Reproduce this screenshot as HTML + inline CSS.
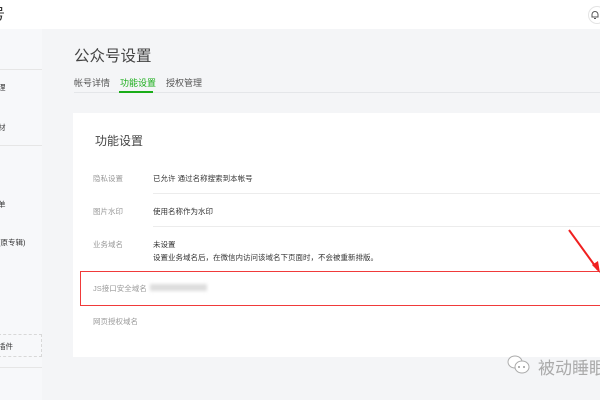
<!DOCTYPE html>
<html><head><meta charset="utf-8"><style>
*{margin:0;padding:0;box-sizing:border-box}
body{width:600px;height:400px;overflow:hidden;background:#f4f5f7;font-family:"Liberation Sans","Noto Sans CJK SC",sans-serif;position:relative;color:#333}
.a{position:absolute;white-space:nowrap}
.lbl{color:#9a9a9a;font-size:7.5px}
.val{color:#353535;font-size:7.5px}
</style></head><body>
<div class="a" style="left:0;top:0;width:600px;height:29px;background:#fff"></div>
<div class="a" style="left:-10px;top:3px;font-size:15px;color:#333">号</div>
<div class="a" style="left:588px;top:6px;width:18px;height:18px;border:1px solid #e4e4e4;border-radius:50%;background:#fff"></div>
<svg class="a" style="left:590px;top:10px" width="10" height="10" viewBox="0 0 10 10"><path d="M2 7 V4.5 a3 3 0 0 1 6 0 V7 H1.5 H8.5 M4 8.5 h2" fill="none" stroke="#555" stroke-width="1"/></svg>
<div class="a" style="left:0;top:29px;width:42px;height:371px;background:#f7f8fa"></div>
<div class="a" style="left:0;top:69px;width:42px;height:1px;background:#e6e6e6"></div>
<div class="a" style="left:0;top:145px;width:42px;height:1px;background:#e6e6e6"></div>
<div class="a val" style="left:-2px;top:82px">理</div>
<div class="a val" style="left:-2px;top:122px">材</div>
<div class="a val" style="left:-2px;top:199px">单</div>
<div class="a val" style="left:-2px;top:237px">(原专辑)</div>
<div class="a" style="left:-2px;top:334px;width:44px;height:23px;border:1px dashed #d8d8d8"></div>
<div class="a val" style="left:-2px;top:341px">插件</div>
<div class="a" style="left:0;top:367px;width:42px;height:1px;background:#e6e6e6"></div>
<div class="a" style="left:74px;top:44px;font-size:15.5px;color:#444">公众号设置</div>
<div class="a" style="left:74px;top:76px;font-size:9px;color:#555">帐号详情</div>
<div class="a" style="left:120px;top:76px;font-size:9px;color:#1aad19">功能设置</div>
<div class="a" style="left:166px;top:76px;font-size:9px;color:#555">授权管理</div>
<div class="a" style="left:74px;top:92px;width:526px;height:1px;background:#e4e6e9"></div>
<div class="a" style="left:119px;top:91px;width:34px;height:2px;background:#1aad19"></div>
<div class="a" style="left:73px;top:113px;width:527px;height:244px;background:#fff"></div>
<div class="a" style="left:95px;top:132px;font-size:12px;color:#444">功能设置</div>
<div class="a lbl" style="left:93px;top:173px">隐私设置</div>
<div class="a val" style="left:153px;top:173px">已允许 通过名称搜索到本帐号</div>
<div class="a" style="left:153px;top:193px;width:447px;height:1px;background:#ececec"></div>
<div class="a lbl" style="left:93px;top:206px">图片水印</div>
<div class="a val" style="left:153px;top:206px">使用名称作为水印</div>
<div class="a" style="left:153px;top:226px;width:447px;height:1px;background:#ececec"></div>
<div class="a lbl" style="left:93px;top:239px">业务域名</div>
<div class="a val" style="left:153px;top:239px">未设置</div>
<div class="a val" style="left:153px;top:252px">设置业务域名后，在微信内访问该域名下页面时，不会被重新排版。</div>
<div class="a" style="left:80px;top:271px;width:525px;height:35px;border:1.5px solid #f03a3a"></div>
<div class="a lbl" style="left:93px;top:283px">JS接口安全域名</div>
<div class="a" style="left:150px;top:284px;width:57px;height:7px;background:#ddd;filter:blur(1.5px)"></div>
<div class="a lbl" style="left:93px;top:316px">网页授权域名</div>
<svg class="a" style="left:560px;top:225px" width="40" height="50"><path d="M9 5 L38 45" stroke="#f02020" stroke-width="2"/><path d="M32 40 L40 48 L38 36 Z" fill="#f02020"/></svg>
<svg class="a" style="left:506px;top:354px" width="26" height="22" viewBox="0 0 26 22"><ellipse cx="9" cy="8" rx="7" ry="6" fill="#fff" stroke="#aaa"/><ellipse cx="16" cy="13" rx="7" ry="6" fill="#fff" stroke="#aaa"/><circle cx="13" cy="13" r="1" fill="#999"/><circle cx="18" cy="13" r="1" fill="#999"/></svg>
<div class="a" style="left:538px;top:354px;font-size:17px;color:#aaa">被动睡眠</div>
</body></html>
